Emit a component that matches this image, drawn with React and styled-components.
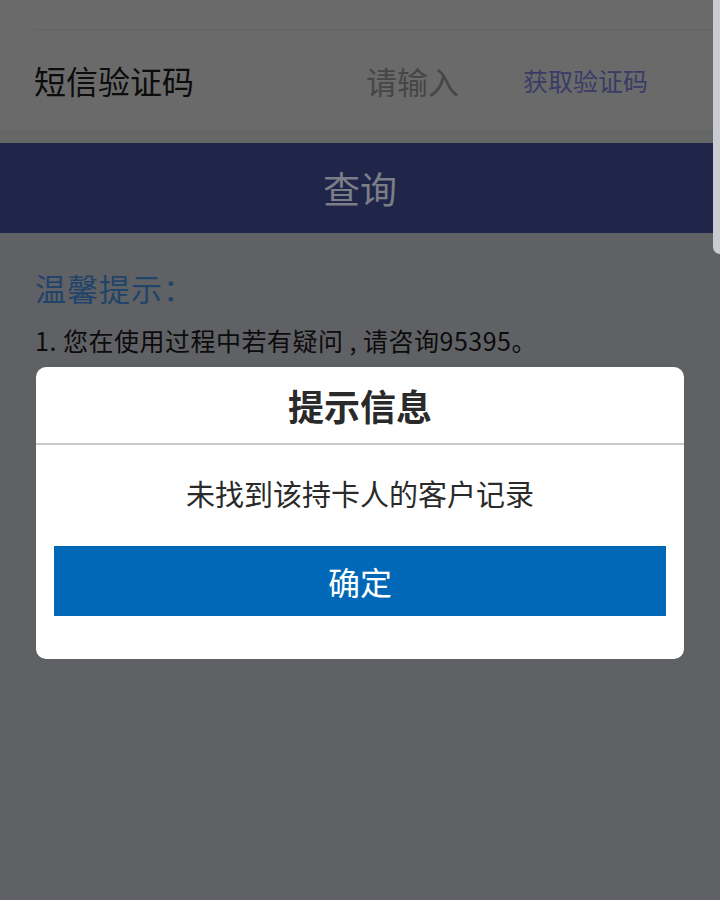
import React from "react";
import styled, { createGlobalStyle } from "styled-components";

const GlobalStyle = createGlobalStyle`
  html, body {
    margin: 0;
    padding: 0;
    background: #606165;
    font-family: "Noto Sans CJK SC", "Noto Sans", sans-serif;
  }
`;

const Page = styled.div`
  position: relative;
  width: 720px;
  height: 900px;
  overflow: hidden;
  background: #606165;
`;

const FormBlock = styled.div`
  background: #6a6a6a;
  padding-top: 29px;
`;

const Divider = styled.div`
  margin-left: 33px;
  height: 1px;
  background: #636363;
`;

const Row = styled.div`
  display: flex;
  align-items: center;
  height: 100px;
  padding: 0 34px;
`;

const Label = styled.div`
  font-size: 32px;
  color: #0c0c0c;
  width: 332px;
`;

const Placeholder = styled.div`
  font-size: 31px;
  color: #464646;
  width: 157px;
`;

const CodeLink = styled.div`
  font-size: 25px;
  color: #3a3b66;
`;

const Band = styled.div`
  height: 13px;
  background: #656767;
`;

const QueryButton = styled.div`
  height: 90px;
  background: #20264a;
  color: #7b7d87;
  font-size: 37px;
  display: flex;
  align-items: center;
  justify-content: center;
`;

const Tips = styled.div`
  padding: 33px 35px 0;
`;

const TipsTitle = styled.div`
  font-size: 31px;
  color: #20446a;
  line-height: 44px;
  letter-spacing: 1px;
`;

const TipsLine = styled.div`
  margin-top: 12px;
  font-size: 25px;
  letter-spacing: 0.5px;
  color: #0c0c0c;
`;

const Scrollbar = styled.div`
  position: absolute;
  top: 0;
  right: 0;
  width: 7px;
  height: 254px;
  background: #cbccd1;
  border-bottom-left-radius: 7px;
`;

const Overlay = styled.div`
  position: absolute;
  inset: 0;
  padding-top: 367px;
  display: flex;
  justify-content: center;
  align-items: flex-start;
`;

const Dialog = styled.div`
  width: 648px;
  background: #ffffff;
  border-radius: 10px;
  padding-bottom: 43px;
`;

const DialogTitle = styled.div`
  height: 76px;
  display: flex;
  align-items: center;
  justify-content: center;
  font-size: 36px;
  font-weight: 700;
  color: #2a2a2a;
  border-bottom: 2px solid #c9c9c9;
`;

const Message = styled.div`
  height: 101px;
  display: flex;
  align-items: center;
  justify-content: center;
  padding-bottom: 6px;
  box-sizing: border-box;
  font-size: 29px;
  color: #2a2a2a;
`;

const OkButton = styled.div`
  margin: 0 18px;
  height: 70px;
  background: #0068b7;
  color: #ffffff;
  font-size: 32px;
  display: flex;
  align-items: center;
  justify-content: center;
`;

const App = () => (
  <Page>
    <GlobalStyle />
    <FormBlock>
      <Divider />
      <Row>
        <Label>短信验证码</Label>
        <Placeholder>请输入</Placeholder>
        <CodeLink>获取验证码</CodeLink>
      </Row>
    </FormBlock>
    <Band />
    <QueryButton>查询</QueryButton>
    <Tips>
      <TipsTitle>温馨提示：</TipsTitle>
      <TipsLine>1. 您在使用过程中若有疑问 , 请咨询95395。</TipsLine>
    </Tips>
    <Scrollbar />
    <Overlay>
      <Dialog>
        <DialogTitle>提示信息</DialogTitle>
        <Message>未找到该持卡人的客户记录</Message>
        <OkButton>确定</OkButton>
      </Dialog>
    </Overlay>
  </Page>
);

export default App;
